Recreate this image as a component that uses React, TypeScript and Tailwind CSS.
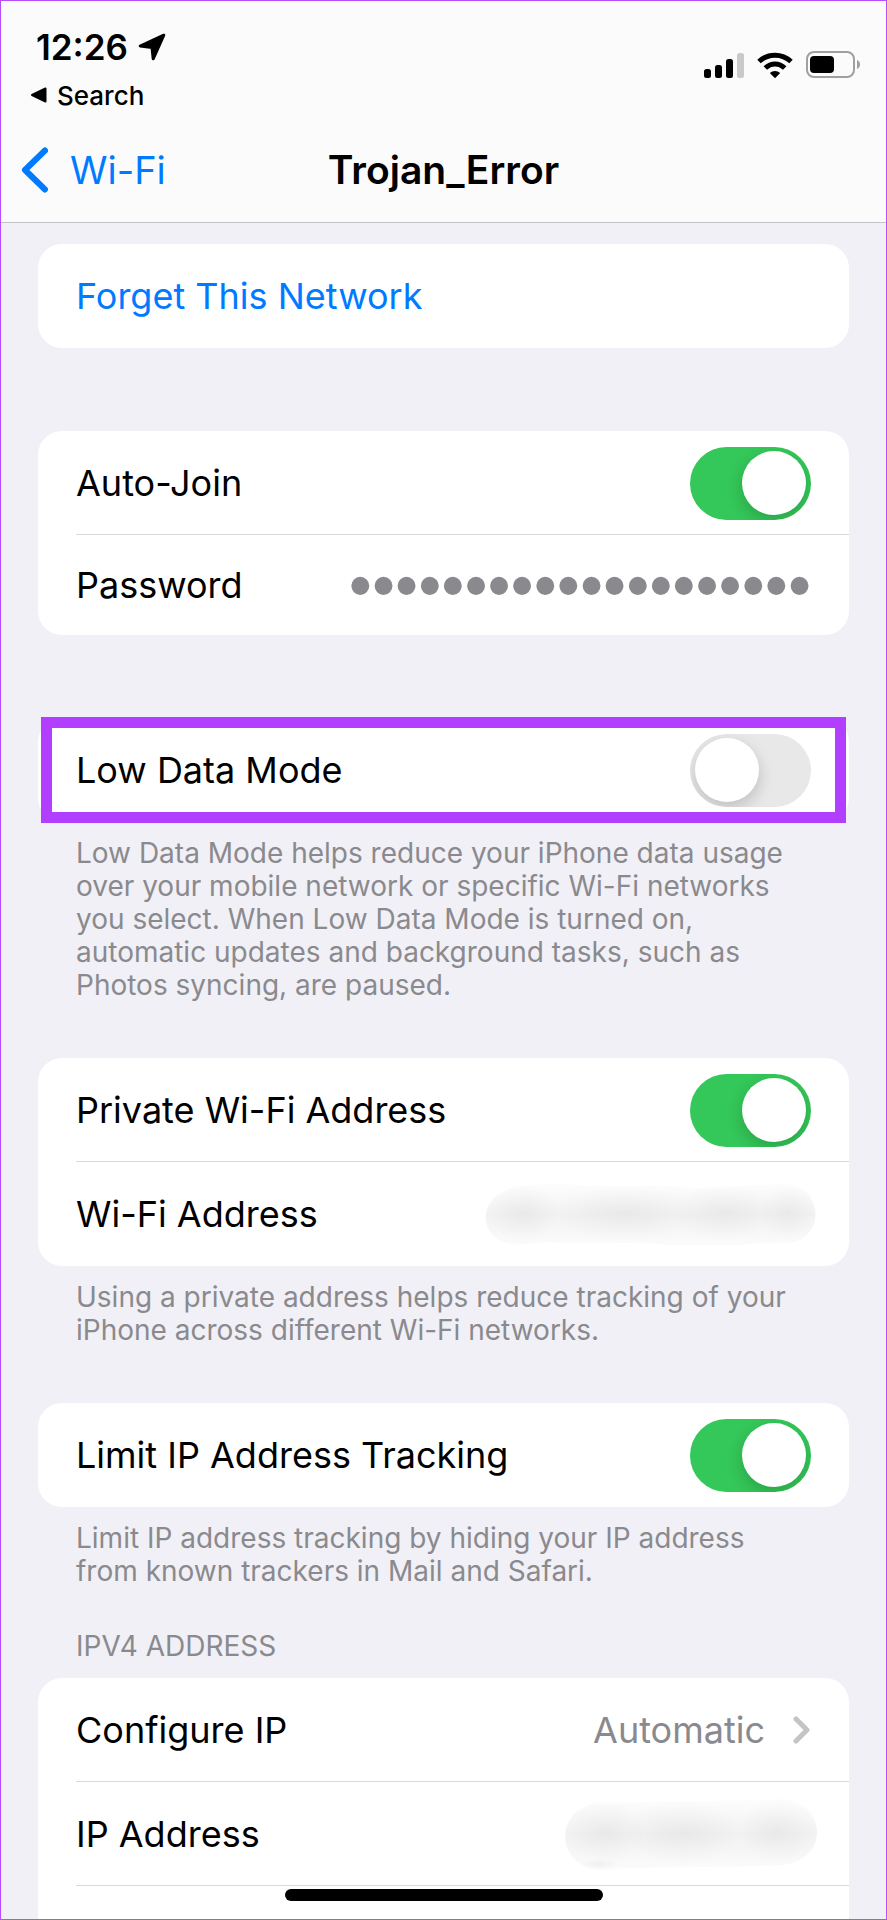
import React, { useState } from 'react';

interface ToggleRowProps {
  id: string;
  label: string;
  defaultOn?: boolean;
}

const Card = ({ children }: { children: React.ReactNode }) => (
  <div className="mx-[37px] rounded-[24px] bg-white">{children}</div>
);

const Divider = () => <div className="-mt-px ml-[38px] h-px bg-[#d9d9dc]" />;

const Footnote = ({ children }: { children: React.ReactNode }) => (
  <p className="mx-[75px] mt-[15px] mb-14 text-[28px] leading-[33px] text-[#8a8a8e]">{children}</p>
);

const ToggleRow = ({ id, label, defaultOn = false }: ToggleRowProps) => {
  const [on, setOn] = useState(defaultOn);

  return (
    <div className="flex h-[104px] items-center justify-between px-[38px]">
      <label htmlFor={id}>{label}</label>
      <input
        id={id}
        type="checkbox"
        role="switch"
        checked={on}
        onChange={(e) => setOn(e.target.checked)}
        className="flex h-[73px] w-[121px] shrink-0 cursor-pointer appearance-none items-center justify-start overflow-hidden rounded-full bg-[#e8e8e9] px-[5px] before:size-16 before:rounded-full before:bg-white before:shadow-[0_6px_16px_rgba(0,0,0,0.18)] before:content-[''] checked:justify-end checked:bg-[#34c759]"
      />
    </div>
  );
};

const LocationArrow = () => (
  <svg width="28" height="28" viewBox="0 0 28 28" aria-hidden="true">
    <path
      d="M25.800 2.200 2.200 13 14 14.500 15.200 25.800Z"
      fill="#000"
      stroke="#000"
      strokeWidth="3"
      strokeLinejoin="round"
    />
  </svg>
);

const SignalIcon = () => (
  <svg width="41" height="26" viewBox="0 0 41 26" aria-hidden="true">
    <rect x="1" y="17" width="7" height="9" rx="2.500" />
    <rect x="12" y="13" width="7" height="13" rx="2.500" />
    <rect x="23" y="7" width="7" height="19" rx="2.500" />
    <rect x="34" y="1" width="7" height="25" rx="2.500" fill="#c9c9c9" />
  </svg>
);

const WifiIcon = () => (
  <svg width="36" height="27" viewBox="0 0 36 27" fill="none" aria-hidden="true">
    <path d="M2 9.500C11 1 25 1 34 9.500" stroke="#000" strokeWidth="5" />
    <path d="M8.300 16C14 10.600 22 10.600 27.700 16" stroke="#000" strokeWidth="5" />
    <path d="M12.800 21C15.800 18.200 20.200 18.200 23.200 21L18 26.300Z" fill="#000" />
  </svg>
);

const BatteryIcon = () => (
  <svg width="55" height="28" viewBox="0 0 55 28" aria-hidden="true">
    <rect x="1" y="1" width="47" height="25" rx="7" fill="none" stroke="#a0a0a0" strokeWidth="2" />
    <rect x="4" y="5" width="24" height="17" rx="4" />
    <path d="M51 9C55 10.500 55 16.500 51 18Z" fill="#a0a0a0" />
  </svg>
);

// smudged-out values
const HiddenWifiAddress = () => (
  <svg className="-mr-1.5" width="332" height="64" viewBox="0 0 332 64" role="img" aria-label="Hidden Wi-Fi address">
    <defs>
      <radialGradient id="smudge">
        <stop offset="0" stopColor="#000" stopOpacity="0.04" />
        <stop offset="1" stopColor="#000" stopOpacity="0" />
      </radialGradient>
      <linearGradient id="smudge-base" x1="0" y1="0" x2="0" y2="1">
        <stop offset="0" stopColor="#fdfdfd" />
        <stop offset="0.5" stopColor="#f2f2f2" />
        <stop offset="1" stopColor="#fbfbfb" />
      </linearGradient>
    </defs>
    <path
      d="M31 5C55 0 80 1 100 4H190C200 7 240 6 250 4C275 3 290 2 302 2C340 6 340 58 302 61C280 62 265 61 255 63H180C170 60 90 62 60 60C45 62 35 64 24 62C-8 55-8 12 31 5Z"
      fill="url(#smudge-base)"
    />
    <ellipse cx="38" cy="31" rx="36" ry="28" fill="url(#smudge)" />
    <ellipse cx="140" cy="31" rx="70" ry="28" fill="url(#smudge)" />
    <ellipse cx="240" cy="30" rx="52" ry="28" fill="url(#smudge)" />
    <ellipse cx="302" cy="30" rx="28" ry="28" fill="url(#smudge)" />
  </svg>
);

const HiddenIpAddress = () => (
  <svg className="-mr-1.5" width="252" height="72" viewBox="0 0 252 72" role="img" aria-label="Hidden IP address">
    <path
      d="M34 5C90 3 160 4 216 1C264 4 264 64 216 67C160 70 90 68 34 72C-11 68-11 9 34 5Z"
      fill="url(#smudge-base)"
    />
    <ellipse cx="40" cy="34" rx="40" ry="32" fill="url(#smudge)" />
    <ellipse cx="118" cy="34" rx="60" ry="32" fill="url(#smudge)" />
    <ellipse cx="212" cy="33" rx="40" ry="32" fill="url(#smudge)" />
    <ellipse cx="34" cy="66" rx="20" ry="5" fill="url(#smudge)" />
  </svg>
);

export default function App() {
  return (
    <div className="relative flex h-screen flex-col overflow-hidden border border-[#b84dff] bg-[#f1f0f6] font-['Inter',sans-serif] text-[36px] text-black">
      <header className="shrink-0 border-b border-[#c3c2c8] bg-[#fbfbfc] pt-[23px]">
        <div className="flex items-start justify-between pr-[25px] pl-[29px]">
          <div>
            <div className="flex h-[46px] items-center gap-2.5 pl-1.5 text-[35px] font-semibold">
              <span>12:26</span>
              <LocationArrow />
            </div>
            <button type="button" className="flex h-[50px] items-center gap-2.5 text-[26px] font-medium">
              <svg width="17" height="16" viewBox="0 0 17 16" aria-hidden="true">
                <path d="M2 8 15.500 1.500V14.500Z" stroke="#000" strokeWidth="2" strokeLinejoin="round" />
              </svg>
              Search
            </button>
          </div>
          <div className="mt-[27px] flex items-center gap-[13px]">
            <SignalIcon />
            <WifiIcon />
            <BatteryIcon />
          </div>
        </div>
        <nav className="grid h-[102px] grid-cols-[1fr_auto_1fr] items-center px-5 pb-0.5 text-[38px]">
          <a href="#wifi" className="flex items-center gap-[22px] text-[#007aff]">
            <svg width="27" height="46" viewBox="0 0 27 46" fill="none" aria-hidden="true">
              <path d="M24 3.500 4 23 24 42.500" stroke="#007aff" strokeWidth="6" strokeLinecap="round" strokeLinejoin="round" />
            </svg>
            Wi-Fi
          </a>
          <h1 className="text-[39px] font-semibold">Trojan_Error</h1>
        </nav>
      </header>

      <main className="min-h-0 flex-1 overflow-hidden pt-[21px]">
        <Card>
          <button type="button" className="flex h-[104px] w-full items-center px-[38px] text-[#007aff]">
            Forget This Network
          </button>
        </Card>

        <div className="my-[83px]">
          <Card>
            <ToggleRow id="auto-join" label="Auto-Join" defaultOn />
            <Divider />
            <div className="flex h-[100px] items-center justify-between px-[38px]">
              <label htmlFor="password">Password</label>
              <input
                id="password"
                type="password"
                readOnly
                defaultValue="trojan-error-network"
                className="h-[76px] w-[464px] text-right font-['Liberation_Sans',sans-serif] text-[66px] text-[#8a8a8e] outline-none"
              />
            </div>
          </Card>
        </div>

        <div className="relative">
          <Card>
            <ToggleRow id="low-data-mode" label="Low Data Mode" />
          </Card>
          <div className="pointer-events-none absolute inset-x-10 -inset-y-px border-[11px] border-[#b23fff]" />
        </div>
        <Footnote>
          Low Data Mode helps reduce your iPhone data usage over your mobile network or specific Wi-Fi networks you
          select. When Low Data Mode is turned on, automatic updates and background tasks, such as Photos syncing, are
          paused.
        </Footnote>

        <Card>
          <ToggleRow id="private-address" label="Private Wi-Fi Address" defaultOn />
          <Divider />
          <div className="flex h-[104px] items-center justify-between px-[38px]">
            <span>Wi-Fi Address</span>
            <HiddenWifiAddress />
          </div>
        </Card>
        <Footnote>
          Using a private address helps reduce tracking of your iPhone across different Wi-Fi networks.
        </Footnote>

        <Card>
          <ToggleRow id="limit-tracking" label="Limit IP Address Tracking" defaultOn />
        </Card>
        <Footnote>
          Limit IP address tracking by hiding your IP address from known trackers in Mail and Safari.
        </Footnote>

        <h2 className="mx-[75px] -mt-3.5 mb-[15px] text-[28px] leading-[33px] text-[#8a8a8e]">IPV4 ADDRESS</h2>
        <Card>
          <button type="button" className="flex h-[104px] w-full items-center justify-between px-[38px]">
            <span>Configure IP</span>
            <span className="flex items-center gap-7 text-[#8a8a8e]">
              Automatic
              <svg width="18" height="28" viewBox="0 0 18 28" fill="none" aria-hidden="true">
                <path d="M3 3 14 14 3 25" stroke="#c4c4c7" strokeWidth="5" strokeLinecap="round" strokeLinejoin="round" />
              </svg>
            </span>
          </button>
          <Divider />
          <div className="flex h-[104px] items-center justify-between px-[38px]">
            <span>IP Address</span>
            <HiddenIpAddress />
          </div>
          <Divider />
          <div className="h-[104px]" />
        </Card>
      </main>

      <div className="absolute inset-x-0 bottom-[18px] mx-auto h-3 w-[318px] rounded-full bg-black" />
    </div>
  );
}
